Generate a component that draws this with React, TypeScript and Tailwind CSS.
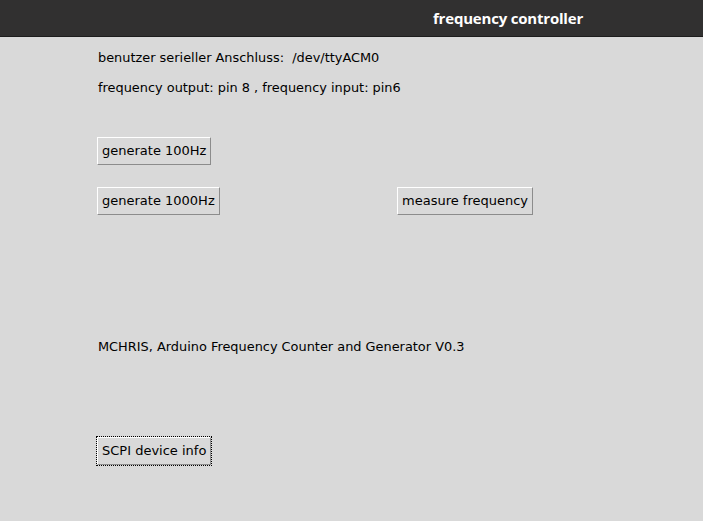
import React from 'react';

function TkButton({ label, focused = false }: { label: string; focused?: boolean }) {
  return (
    <div
      className={
        focused
          ? 'inline-flex border border-dotted border-black'
          : 'inline-flex border border-[#d9d9d9]'
      }
    >
      <button className="h-[28px] px-[4px] flex items-center bg-[#d9d9d9] border border-t-white border-l-white border-b-[#8c8c8c] border-r-[#8c8c8c] text-[13px] text-black">
        {label}
      </button>
    </div>
  );
}

export default function App() {
  return (
    <div className="w-[703px] h-[521px] bg-[#d9d9d9] flex flex-col overflow-hidden" style={{ fontFamily: '"DejaVu Sans", sans-serif' }}>
      {/* title bar */}
      <div className="h-[37px] bg-[#313030] border-b border-[#1d1d1d] flex items-center justify-end pr-[120px] shrink-0">
        <span className="text-white font-bold text-[15px] tracking-[-0.2px]" style={{ fontFamily: '"Open Sans", sans-serif' }}>
          frequency controller
        </span>
      </div>

      <div className="flex flex-col pl-[96px] pt-[6px] text-[12.9px] text-black">
        <div className="h-[30px] leading-[30px] pl-[2px]">benutzer serieller Anschluss:&nbsp; /dev/ttyACM0</div>
        <div className="h-[30px] leading-[30px] pl-[2px]">frequency output: pin 8 , frequency input: pin6</div>

        <div className="mt-[33px]">
          <TkButton label="generate 100Hz" />
        </div>

        <div className="mt-[20px] flex">
          <div className="w-[300px]">
            <TkButton label="generate 1000Hz" />
          </div>
          <TkButton label="measure frequency" />
        </div>

        <div className="mt-[116px] h-[30px] leading-[30px] pl-[2px]">MCHRIS, Arduino Frequency Counter and Generator V0.3</div>

        <div className="mt-[74px]">
          <TkButton label="SCPI device info" focused />
        </div>
      </div>
    </div>
  );
}
